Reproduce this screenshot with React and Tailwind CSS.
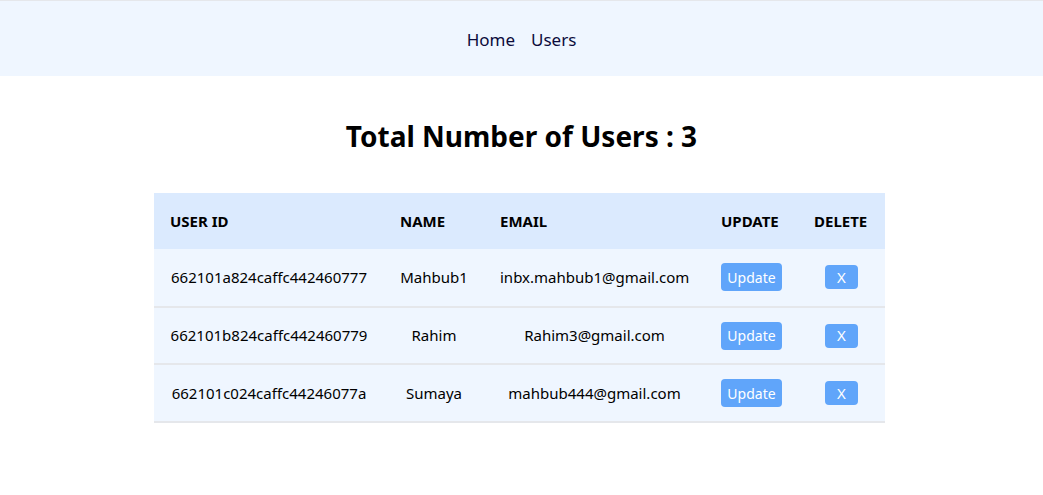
import React from 'react';

const users = [
  { _id: '662101a824caffc442460777', name: 'Mahbub1', email: 'inbx.mahbub1@gmail.com' },
  { _id: '662101b824caffc442460779', name: 'Rahim', email: 'Rahim3@gmail.com' },
  { _id: '662101c024caffc44246077a', name: 'Sumaya', email: 'mahbub444@gmail.com' },
];

const App = () => {
  return (
    <div className="min-h-screen bg-white text-black" style={{ fontFamily: '"Noto Sans", "Open Sans", sans-serif' }}>
      {/* Navbar */}
      <nav className="h-[76px] bg-blue-50 border-t border-gray-200 flex items-center justify-center gap-4 pt-[2px] text-[17px] text-[#0b0b3b]">
        <a href="#">Home</a>
        <a href="#">Users</a>
      </nav>

      <h1 className="mt-[40px] text-center text-[28px] leading-[40px] font-bold">
        Total Number of Users : 3
      </h1>

      <div className="mt-[37px] flex justify-center pr-1">
        <table className="w-[731px] table-fixed border-collapse text-[15px]">
          <colgroup>
            <col className="w-[230px]" />
            <col className="w-[100px]" />
            <col className="w-[221px]" />
            <col className="w-[93px]" />
            <col className="w-[87px]" />
          </colgroup>
          <thead>
            <tr className="bg-blue-100 h-[56px] text-left uppercase font-bold">
              <th className="px-4">User ID</th>
              <th className="px-4">Name</th>
              <th className="px-4">Email</th>
              <th className="px-4">Update</th>
              <th className="px-4">Delete</th>
            </tr>
          </thead>
          <tbody>
            {users.map((user) => (
              <tr key={user._id} className="bg-blue-50 h-[57.7px] border-b-2 border-gray-200 text-center">
                <td className="px-4">{user._id}</td>
                <td className="px-4">{user.name}</td>
                <td className="px-4">{user.email}</td>
                <td className="px-4">
                  <button className="bg-[#60a5fa] text-white text-[14px] rounded w-[61px] h-[28px]">Update</button>
                </td>
                <td className="px-4">
                  <button className="bg-[#60a5fa] text-white text-[15px] rounded w-[33px] h-[24px]">X</button>
                </td>
              </tr>
            ))}
          </tbody>
        </table>
      </div>
    </div>
  );
};

export default App;
